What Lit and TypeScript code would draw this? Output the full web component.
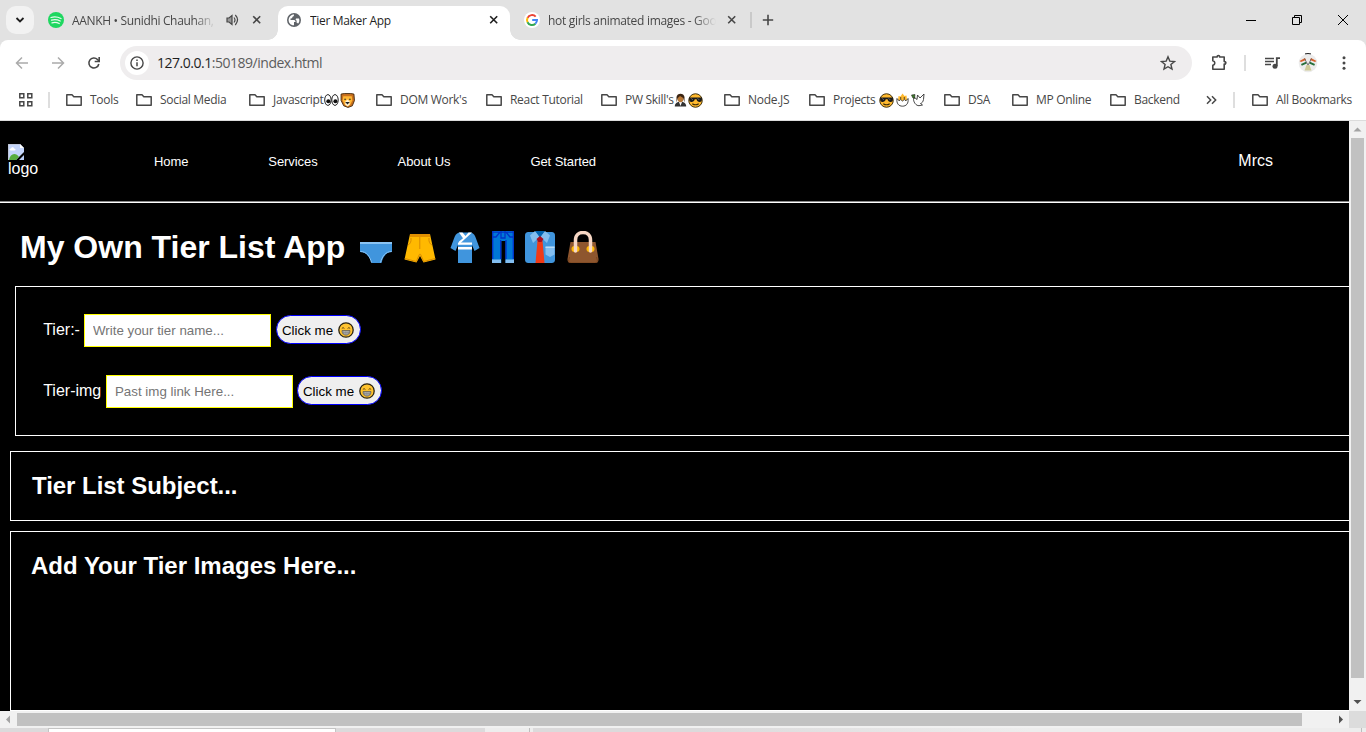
import { LitElement, html, css, svg } from "lit";
import { customElement } from "lit/decorators.js";

const icon = (w: number, h: number, body: unknown, vb = `0 0 ${w} ${h}`) =>
  html`<svg width=${w} height=${h} viewBox=${vb} fill="none" aria-hidden="true">${body}</svg>`;

const folder = () => icon(18, 14, svg`<path d="M1.8 12.2V1.8H7l1.8 1.9h7.4v8.5z" stroke="#474747" stroke-width="1.5" stroke-linejoin="round"/>`);
const closeX = (c: string) => icon(10, 10, svg`<path d="M1.2 1.2l7 7M8.200 1.200l-7 7" stroke=${c} stroke-width="1.6"/>`);

const eyes = () => icon(15, 14, svg`<ellipse cx="3.900" cy="7" rx="3.200" ry="5.400" fill="#fff" stroke="#222"/><ellipse cx="11" cy="7" rx="3.200" ry="5.400" fill="#fff" stroke="#222"/><circle cx="4.300" cy="8.200" r="2" fill="#111"/><circle cx="11.400" cy="8.200" r="2" fill="#111"/>`);
const lion = () => icon(15, 15, svg`<path d="M1 1l3-.5h6l3 .5.5 6-2 5-4 1.500-4-1.500-2.500-5z" fill="#c9701c" stroke="#3a2208" stroke-width=".8"/><path d="M3 3h8l.5 4-2 4-2.500 1.500L4.500 11 2.500 7z" fill="#ffb733"/><path d="M5 8l2-2 2 2v3l-2 1.300L5 11z" fill="#fff3d8"/><path d="M4 5.800h1.500M8.500 5.800H10M6 9h2L7 10z" stroke="#222"/>`, "0 0 14 14");
const manager = () => icon(13, 14, svg`<path d="M.8 13.500c0-3 2-4.800 5.700-4.800s5.700 1.800 5.700 4.800z" fill="#333"/><path d="M5 9h3l-1.500 4z" fill="#fff"/><ellipse cx="6.500" cy="5.500" rx="3" ry="3.700" fill="#b97836"/><path d="M2.500 9.500V4c.5-4.500 7.500-4.500 8 0v5.500L9.200 5 6 3 3.800 5z" fill="#3a2412"/>`);
const cool = () => icon(15, 15, svg`<circle cx="7" cy="7" r="6.300" fill="#ffb92e" stroke="#3b2b06" stroke-width=".9"/><path d="M1 4.200h12v2.500c-.6 2.300-4.500 2.500-5-.8H6.300c-.6 3.300-4.700 3.100-5.200.8z" fill="#1a1a1a"/><path d="M3 5l1.500 1.500M9 5l1.500 1.500" stroke="#8a8a8a" stroke-width=".7"/><path d="M4 10q3 2 6 0" stroke="#3b2b06"/>`, "0 0 14 14");
const chick = () => icon(13, 14, svg`<path d="M2 7.500L2.500 3l2 .5L6.500.5 8.500 3l2-.5.5 5-2 2H4z" fill="#ffb92e"/><path d="M1 5.500l2 2.300 1.700-1.300L6.500 8l1.800-1.500L10 7.800l2-2.300c.8 5-1.800 7.700-5.500 7.700S.2 10.500 1 5.500z" fill="#fff" stroke="#333" stroke-width=".9"/><circle cx="4.700" cy="5" r=".7" fill="#222"/><circle cx="8.300" cy="5" r=".7" fill="#222"/>`);
const dove = () => icon(14, 14, svg`<path d="M3 4l3 2.500L6.500 2 9 5l4-4-.5 5.500c-.5 2.500-1.500 3.500-3 4l2 1.500-3.500.7c-3 0-5-3-5.500-6z" fill="#fff" stroke="#333" stroke-width=".9"/><path d="M.5 2l3.500-.5-.5 4-1.800-.8z" fill="#3d7d28" stroke="#222" stroke-width=".6"/>`);
const grin = () => icon(16, 16, svg`<circle cx="8" cy="8" r="7.200" fill="#ffc32e" stroke="#2b2412" stroke-width="1.300"/><path d="M3.800 6.500q1.200-1.800 2.600 0M9.600 6.500q1.300-1.800 2.600 0" stroke="#54380a" stroke-width=".9"/><path d="M4 8.600h8c0 2.700-1.600 4.500-4 4.500s-4-1.800-4-4.500z" fill="#c9c9c9" stroke="#54504a" stroke-width=".8"/><path d="M5.200 8.700v3M7.100 8.700v4.200M9 8.700v4.200M10.900 8.700v3M4.200 10.800h7.600" stroke="#777" stroke-width=".7"/>`);

const briefs = () => icon(32, 32, svg`<path d="M0 11h32v10c-6 0-9 5-10.500 11h-10C10 26 6 21 0 21z" fill="#4095dd"/><path d="M0 11h32v2H0z" fill="#8ac4f4"/><path d="M.5 20.500c6 0 9.500 5 11 11M31.500 20.500c-6 0-9.500 5-11 11" stroke="#8ac4f4"/>`);
const shorts = () => icon(32, 32, svg`<path d="M6 3h20l5.500 25.500-12 3L16 25l-3.500 6.500L.5 28.500z" fill="#ffb900"/><path d="M6 3h20v3H6z" fill="#e08f00"/><path d="M15.800 6v12M7 7c.5 4-1 6-3 7M25 7c-.5 4 1 6 3 7M.8 27.500l11.500 3 3-7 .7-.5.7.500 3 7 11.500-3" stroke="#d98b00"/>`);
const kimono = () => icon(30, 32, svg`<path d="M9 1.500h12c3 1 4 3 5 6L29.500 17l-5 3L22 14v18H8V14l-2.500 6-5-3L4 7.500c1-3 2-5 5-6z" fill="#4095dd"/><path d="M9 1.500h3.500l3 3.500 3-3.500H22L9 13.500v-3l4-3.300z" fill="#fff"/><path d="M8 11.500h14v2.300H8zM8 16h14v2.500H8z" fill="#fff"/>`);
const jeans = () => icon(22, 32, svg`<path d="M0 0h22v32h-8.500V10H9.300v22H0z" fill="#0078d7"/><path d="M.7 0v28M21.300 0v28M0 1.200h22M9 0v7h4V0M1 6h3l4-5M21 6h-3l-4-5M8.700 9v19M14 9v19" stroke="#0032c8" stroke-width="1.300"/><path d="M0 28.500h9V32H0zM13.500 28.500H22V32h-8.500z" fill="#83bef0"/>`);
const shirt = () => icon(30, 32, svg`<path d="M0 5c0-3 1-4 4-4h22c3 0 4 1 4 4v23c0 3-1 4-4 4H4c-3 0-4-1-4-4z" fill="#4095dd"/><path d="M10 0h10l-5 7z" fill="#0063b1"/><path d="M10 0L5 4.500 8 12l6.500-6zM20 0l5 4.500L22 12l-6.500-6z" fill="#83bef0"/><path d="M12.500 9.500h5L19.500 32h-9z" fill="#f03a17"/><path d="M15 5l3.500 3-2 3h-3l-2-3z" fill="#a80e20"/><path d="M20.500 15h9v8.500l-4.500 2.500-4.500-2.500z" fill="#83bef0"/><path d="M20.500 16.500h9" stroke="#b9dcf7"/>`);
const bag = () => icon(32, 32, svg`<path d="M3.500 11h25L31.500 28c0 3-1 4-4 4h-23c-3 0-4-1-4-4z" fill="#8e562e"/><path d="M2.500 26l-1 4q0 2 3 2h23q3 0 3-2l-1-4" stroke="#79451f"/><rect x="4.500" y="15" width="8" height="6" rx="3" fill="#ffb900"/><rect x="19.500" y="15" width="8" height="6" rx="3" fill="#ffb900"/><path d="M8.500 20V9c0-10 15-10 15 0v11" stroke="#f7d7c4" stroke-width="3.500" stroke-linecap="round"/>`);

interface Bookmark { label: string; width: number; emoji?: unknown[] }
const bookmarks: Bookmark[] = [
  { label: "Tools", width: 70 },
  { label: "Social Media", width: 113 },
  { label: "Javascript", width: 127, emoji: [eyes(), lion()] },
  { label: "DOM Work's", width: 110 },
  { label: "React Tutorial", width: 115 },
  { label: "PW Skill's", width: 123, emoji: [manager(), cool()] },
  { label: "Node.JS", width: 85 },
  { label: "Projects", width: 135, emoji: [cool(), chick(), dove()] },
  { label: "DSA", width: 68 },
  { label: "MP Online", width: 98 },
  { label: "Backend", width: 97 },
];

@customElement("browser-chrome")
class BrowserChrome extends LitElement {
  static styles = css`
    :host { display: block; font: 12px/16px "Open Sans", "Noto Sans", sans-serif; color: #474747; letter-spacing: -0.3px; }
    svg { display: block; flex: none; }
    .tabs { height: 40px; background: #e2e2e2; display: flex; align-items: stretch; }
    .search { width: 28px; height: 28px; margin: 6px 0 0 6px; border-radius: 10px; background: #f2f2f2; display: grid; place-items: center; }
    .tab { display: flex; align-items: center; box-sizing: border-box; height: 40px; }
    .one { width: 236px; padding-left: 14px; margin-right: 8px; }
    .one .name { width: 144px; letter-spacing: -0.34px; }
    .name { white-space: nowrap; overflow: hidden; margin-left: 8px; padding-top: 2px; }
    .fade { -webkit-mask-image: linear-gradient(90deg, #000 calc(100% - 22px), transparent); mask-image: linear-gradient(90deg, #000 calc(100% - 22px), transparent); }
    .speaker { margin: 0 13px 0 10px; }
    .active { position: relative; width: 232px; height: 34px; margin-top: 6px; padding: 0 0 6px 9px; background: #fff; border-radius: 10px 10px 0 0; color: #1f1f1f; }
    .active::before, .active::after { content: ""; position: absolute; bottom: 0; width: 10px; height: 10px; }
    .active::before { left: -10px; background: radial-gradient(circle at 0 0, transparent 9.500px, #fff 10px); }
    .active::after { right: -10px; background: radial-gradient(circle at 100% 0, transparent 9.500px, #fff 10px); }
    .active .name { flex: 1; margin-left: 9px; letter-spacing: -0.32px; }
    .active svg:last-child { margin-right: 11px; }
    .three { width: 240px; padding-left: 14px; }
    .three .name { width: 168px; }
    .three svg:last-child { margin-left: 11px; }
    .new { display: flex; align-items: center; gap: 10px; flex: 1; }
    .bar { width: 2px; height: 16px; background: #c9c9c9; }
    .win { display: flex; align-items: center; gap: 36px; padding-right: 18px; }
    .toolbar { background: linear-gradient(#e2e2e2 10px, #fff 10px); }
    .tools { height: 46px; background: #fff; border-radius: 8px 8px 0 0; display: flex; align-items: center; box-sizing: border-box; padding: 0 14px; }
    .nav { display: flex; gap: 20px; width: 106px; }
    .url { width: 1072px; height: 34px; border-radius: 17px; background: #efedee; display: flex; align-items: center; box-sizing: border-box; padding: 0 16px 0 5px; font-size: 14px; letter-spacing: -0.48px; color: #5c5c5c; }
    .info { width: 24px; height: 24px; border-radius: 12px; background: #fff; display: grid; place-items: center; margin-right: 8px; }
    .host { color: #1f1f1f; }
    .address { flex: 1; }
    .right { display: flex; align-items: center; flex: 1; padding-left: 17.500px; }
    .right .sep { margin: 0 19px 0 15px; }
    .sep { width: 2px; height: 16px; background: #dedede; }
    .avatar { margin: 0 24px 0 17px; }
    .marks { height: 35px; border-bottom: 1px solid #dcdcdc; background: #fff; display: flex; align-items: center; padding: 0 0 6px 18px; box-sizing: border-box; }
    .marks > .sep { margin: 0 15px 0 13px; }
    .mark { display: flex; align-items: center; white-space: nowrap; flex: none; }
    .mark .txt { margin-left: 7px; }
    .emo { display: flex; align-items: center; gap: 1px; }
    .wide .emo { gap: 2px; margin-left: 4px; }
    .all { margin-left: auto; padding-right: 14px; }
    .all .sep { margin-right: 16px; }
  `;

  render() {
    return html`
      <div class="tabs">
        <div class="search">${icon(10, 8, svg`<path d="M1.500 2l3.500 3.500L8.500 2" stroke="#1f1f1f" stroke-width="1.800"/>`)}</div>
        <div class="tab one">
          ${icon(16, 16, svg`<circle cx="8" cy="8" r="8" fill="#1ed760"/><path d="M3 5.500q5-1.500 10 1M3.500 8.200q4.500-1.300 8.700.8M4 10.800q4-1 7.200.7" stroke="#e9fbef" stroke-width="1.300" stroke-linecap="round"/>`)}
          <span class="name fade">AANKH • Sunidhi Chauhan,</span>
          <span class="speaker">${icon(13, 12, svg`<path d="M1 4h2l3-2.500v9L3 8H1z" fill="#9a9a9a" stroke="#474747" stroke-width="1.200"/><path d="M8 3.500q2 2.500 0 5M9.300 1q4.500 4.700 0 10" stroke="#474747" stroke-width="1.200"/>`)}</span>
          ${closeX("#474747")}
        </div>
        <div class="tab active">
          ${icon(14, 14, svg`<circle cx="7" cy="7" r="7" fill="#5f6368"/><path d="M7 1.500c0 1.500-.3 2-1.500 2.300C5.500 5 4.800 5.500 3.500 5.600V7H7c1.300.2 1.500 1 1.500 2H7v3.200c-3 .3-5.200-2.200-5.400-5L1.600 7C1.700 4 4 1.500 7 1.500zM12 5.500c.8 2 .2 4-1 5.300-.3-.8-.8-1-1.400-1V8c0-.7-.4-1-1-1L9 5.500z" fill="#fff"/>`)}
          <span class="name">Tier Maker App</span>
          ${closeX("#1f1f1f")}
        </div>
        <div class="tab three">
          ${icon(16, 16, svg`<circle cx="8" cy="8" r="8" fill="#fff"/><path d="M11.700 4.600A5 5 0 0 0 3.600 5.900" stroke="#ea4335" stroke-width="2"/><path d="M3.600 5.700a5 5 0 0 0 0 4.700" stroke="#fbbc05" stroke-width="2"/><path d="M3.500 10.200a5 5 0 0 0 7.900 1.500" stroke="#34a853" stroke-width="2"/><path d="M8.200 8.100H13a5 5 0 0 1-1.700 3.700" stroke="#4285f4" stroke-width="2"/>`)}
          <span class="name fade">hot girls animated images - Goo</span>
          ${closeX("#474747")}
        </div>
        <div class="new"><span class="bar"></span>${icon(12, 12, svg`<path d="M6 .8v10.400M.8 6h10.400" stroke="#474747" stroke-width="1.600"/>`)}</div>
        <div class="win">
          ${icon(10, 11, svg`<path d="M0 5.500h10" stroke="#000"/>`)}
          ${icon(10, 10, svg`<path d="M.5 2.500h7v7h-7zM2.500 2.500v-2h7v7h-2" stroke="#000"/>`)}
          ${icon(10, 10, svg`<path d="M0 0l10 10M10 0L0 10" stroke="#000"/>`)}
        </div>
      </div>
      <div class="toolbar"><div class="tools">
        <div class="nav">
          ${icon(16, 16, svg`<path d="M14 8H3M8 2.500L2.500 8 8 13.500" stroke="#ababab" stroke-width="1.500"/>`)}
          ${icon(16, 16, svg`<path d="M2 8h11M8 2.500L13.500 8 8 13.500" stroke="#ababab" stroke-width="1.500"/>`)}
          ${icon(16, 16, svg`<path d="M12.800 9A5 5 0 1 1 11.500 4.500L13 6" stroke="#474747" stroke-width="1.600"/><path d="M13.200 2v4.500H8.700" stroke="#474747" stroke-width="1.600"/>`)}
        </div>
        <div class="url">
          <span class="info">${icon(14, 14, svg`<circle cx="7" cy="7" r="6.100" stroke="#474747" stroke-width="1.400"/><path d="M7 6.200v4M7 3.500V5" stroke="#474747" stroke-width="1.500"/>`)}</span>
          <span class="address"><span class="host">127.0.0.1</span>:50189/index.html</span>
          ${icon(16, 16, svg`<path d="M8 1.800l1.800 4.300 4.700.4-3.600 3 1.100 4.600L8 11.700l-4 2.400 1.100-4.600-3.600-3 4.700-.4z" stroke="#474747" stroke-width="1.400"/>`)}
        </div>
        <div class="right">
          ${icon(19, 18, svg`<path d="M2.800 3h4.400c-.2-2 2.600-2 2.400 0h4.600v4.600c2.200-.3 2.200 2.800 0 2.500v5.100H2.800v-3.800c2.700-.6 2.700-4 0-4.600z" stroke="#474747" stroke-width="1.600" stroke-linejoin="round"/>`)}
          <span class="sep"></span>
          ${icon(16, 14, svg`<path d="M0 2.500h9M0 5.500h9M0 8.500h6" stroke="#474747" stroke-width="1.500"/><path d="M11.800 10V2.200H15" stroke="#474747" stroke-width="1.800"/><circle cx="10" cy="10.300" r="2.500" fill="#474747"/>`)}
          <span class="avatar">${icon(20, 20, svg`<circle cx="10" cy="10" r="9.300" fill="#ececec"/><path d="M7 .9q3-.8 6 0" stroke="#222"/><path d="M1.500 8l5.500-3 1 2-5 2zM18.500 8L13 5l-1 2 5 2z" fill="#d8602a"/><path d="M3 11l5-2.300.8 1.800-5 2.200zM17 11l-5-2.300-.8 1.800 5 2.200z" fill="#26703a"/><path d="M6.500 5.500L11 14M13.500 5.500L9 14" stroke="#666" stroke-width=".9"/><path d="M8.500 12h3l2 5.500h-7z" fill="#cfcb97"/>`)}</span>
          ${icon(4, 14, svg`<circle cx="2" cy="1.800" r="1.500" fill="#474747"/><circle cx="2" cy="7" r="1.500" fill="#474747"/><circle cx="2" cy="12.200" r="1.500" fill="#474747"/>`)}
        </div>
      </div></div>
      <div class="marks">
        ${icon(17, 16, svg`<path d="M1.800 1.700h4v4h-4zM9.800 1.700h4v4h-4zM1.800 9.700h4v4h-4zM9.800 9.700h4v4h-4z" stroke="#474747" stroke-width="1.500"/>`)}
        <span class="sep"></span>
        ${bookmarks.map((b) => html`<div class="mark ${b.label === "Projects" ? "wide" : ""}" style="width:${b.width}px">${folder()}<span class="txt">${b.label}</span>${b.emoji ? html`<span class="emo">${b.emoji}</span>` : ""}</div>`)}
        ${icon(11, 10, svg`<path d="M1 1.200L4.700 5 1 8.800M6 1.200L9.700 5 6 8.800" stroke="#474747" stroke-width="1.500"/>`)}
        <div class="mark all"><span class="sep"></span>${folder()}<span class="txt">All Bookmarks</span></div>
      </div>`;
  }
}

@customElement("tier-page")
class TierPage extends LitElement {
  static styles = css`
    :host { display: block; overflow: hidden; background: #000; color: #fff; font: 16px/18px "Liberation Sans", Arial, sans-serif; height: 590px; }
    svg { display: block; flex: none; }
    header { height: 80px; display: flex; align-items: center; padding: 0 76px 0 8px; border-bottom: 1px solid #888; box-shadow: 0 1px #fff; }
    .logo { width: 116px; margin-right: 30px; line-height: 17px; padding-bottom: 2px; }
    nav { display: flex; flex: 1; gap: 80px; font-size: 13px; letter-spacing: -0.08px; padding-top: 2px; }
    h1, h2 { margin: 0; font-weight: 700; }
    h1 { display: flex; align-items: center; height: 84px; padding: 6px 0 0 20px; box-sizing: border-box; font-size: 32px; line-height: 36px; white-space: nowrap; }
    .clothes { display: flex; gap: 12px; margin-left: 15px; }
    .clothes svg:nth-child(3) { margin-left: 1.500px; }
    .clothes svg:nth-child(5), .clothes svg:nth-child(6) { margin-left: -0.500px; }
    .panel { border: 1px solid #fff; border-right: 0; box-sizing: border-box; }
    .form { height: 150px; margin-left: 15px; padding: 27px 0 0 27.200px; display: flex; flex-direction: column; gap: 28px; }
    .row { display: flex; align-items: center; height: 33px; }
    .row label { margin-top: -2px; width: 40.800px; white-space: nowrap; }
    .row.long label { width: 62.800px; }
    input { box-sizing: border-box; width: 187px; height: 33px; border: 1px solid #ff0; border-radius: 0; padding: 0 8px; margin: 0 5px 0 0; font: 13.333px "Liberation Sans", Arial, sans-serif; background: #fff; }
    .long input { margin-right: 4px; }
    input::placeholder { color: #757575; }
    button { box-sizing: border-box; width: 85px; height: 29px; border: 1px solid #00f; border-radius: 15px; background: #efefef; color: #000; padding: 1px 0 0 5px; display: flex; align-items: center; gap: 5px; font: 13.333px "Liberation Sans", Arial, sans-serif; white-space: nowrap; margin-top: -2px; }
    h2 { font-size: 24px; line-height: 28px; }
    .subject { height: 70px; margin: 15px 0 0 10px; padding: 20px 0 0 21px; }
    .subject h2 { letter-spacing: -0.04px; }
    .images { height: 180px; margin: 10px 0 0 10px; padding: 20px 0 0 20px; }
  `;

  render() {
    const row = (label: string, hint: string, kind = "") => html`
      <div class="row ${kind}"><label>${label}</label><input placeholder=${hint} /><button>Click me ${grin()}</button></div>`;
    return html`
      <header>
        <div class="logo">
          ${icon(16, 16, svg`<path d="M0 0h12l4 4v4L8 16H0z" fill="#c4d5fb"/><path d="M0 16V0h12" stroke="#b9b9b9"/><path d="M12 0v4h4z" fill="#fff"/><path d="M3 6.500c-2 0-2-2 0-2 .5-2 3-1.500 3 0 2 0 2 2 .5 2z" fill="#fff"/><path d="M1 16c1-7 7-8 10-3l-3 3z" fill="#57ad3e"/><path d="M16 11v5h-5z" fill="#b9cdf6"/>`)}
          logo
        </div>
        <nav><span>Home</span><span>Services</span><span>About Us</span><span>Get Started</span></nav>
        <span>Mrcs</span>
      </header>
      <h1>My Own Tier List App
        <span class="clothes">${briefs()}${shorts()}${kimono()}${jeans()}${shirt()}${bag()}</span>
      </h1>
      <section class="panel form">${row("Tier:-", "Write your tier name...")}${row("Tier-img", "Past img link Here...", "long")}</section>
      <section class="panel subject"><h2>Tier List Subject...</h2></section>
      <section class="panel images"><h2>Add Your Tier Images Here...</h2></section>`;
  }
}

@customElement("app-root")
class AppRoot extends LitElement {
  static styles = css`
    :host { display: block; width: 1366px; height: 732px; overflow: hidden; background: #fff; }
    svg { display: block; }
    .view { display: grid; grid-template-columns: 1349px 17px; grid-template-rows: 590px 17px; }
    .v, .h { background: #f1f1f1; display: flex; align-items: center; }
    .v { flex-direction: column; }
    .arrow { width: 17px; height: 17px; display: grid; place-items: center; }
    .v .thumb { width: 13px; height: 540px; background: #c1c1c1; margin-bottom: auto; }
    .h .thumb { height: 13px; width: 1285px; background: #c1c1c1; margin-right: auto; }
    .corner { background: #dcdcdc; }
    .below { height: 4px; display: grid; grid-template-columns: 48px 288px 149px 44px 1px 3px 828px 1px 1fr; }
    .g { background: #dbdadb; }
    .w { background: #fff; border: 1px solid #c4c4c4; border-bottom: 0; }
    .l { background: #ededed; }
    .m { background: linear-gradient(90deg, #dbdadb 20%, #ededed 60%); }
    .d { background: #bdbdbd; }
  `;

  render() {
    const arrow = (d: string, c: string) => html`<span class="arrow">${icon(9, 9, svg`<path d=${d} fill=${c}/>`)}</span>`;
    return html`
      <browser-chrome></browser-chrome>
      <div class="view">
        <tier-page></tier-page>
        <div class="v">${arrow("M.500 6.500L4.500 2.500l4 4z", "#a3a3a3")}<div class="thumb"></div>${arrow("M.500 2h8l-4 4z", "#505050")}</div>
        <div class="h">${arrow("M6 .5v8l-4-4z", "#a3a3a3")}<div class="thumb"></div>${arrow("M3 .5v8l4-4z", "#505050")}</div>
        <div class="corner"></div>
      </div>
      <div class="below"><i class="g"></i><i class="w"></i><i class="g"></i><i class="l"></i><i class="d"></i><i class="l"></i><i class="m"></i><i class="d"></i><i class="l"></i></div>`;
  }
}
